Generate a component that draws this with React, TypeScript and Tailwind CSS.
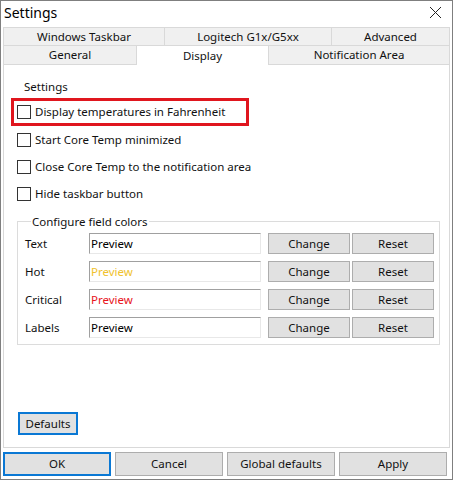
import React from 'react';

const font = { fontFamily: '"Noto Sans", "Liberation Sans", sans-serif' };

const Checkbox = ({ label }: { label: string }) => (
  <div className="flex items-center gap-[4px]">
    <span className="w-[14px] h-[14px] border border-[#333333] bg-white" />
    <span>{label}</span>
  </div>
);

const Btn = ({ label, focused = false, className = '' }: { label: string; focused?: boolean; className?: string }) => (
  <button
    className={`flex items-center justify-center bg-[#e1e1e1] text-[#111] ${
      focused ? 'border-2 border-[#0a78d4]' : 'border border-[#adadad]'
    } ${className}`}
  >
    {label}
  </button>
);

const App = () => {
  const topTabs = [
    { label: 'Windows Taskbar', w: 'w-[162px]' },
    { label: 'Logitech G1x/G5xx', w: 'w-[168px]' },
    { label: 'Advanced', w: 'flex-1' },
  ];

  const colorRows = [
    { label: 'Text', color: 'text-black' },
    { label: 'Hot', color: 'text-[#f0c22e]' },
    { label: 'Critical', color: 'text-[#e8141c]' },
    { label: 'Labels', color: 'text-black' },
  ];

  return (
    <div
      style={font}
      className="w-[453px] h-[480px] flex flex-col bg-white border border-[#7f7f7f] text-[11.5px] text-[#111] overflow-hidden"
    >
      {/* Title bar */}
      <div className="h-[26px] flex items-center justify-between pl-[3px] pr-[10px] pb-[4px] shrink-0">
        <span className="text-[14px] text-black">Settings</span>
        <svg width="13" height="13" viewBox="0 0 13 13">
          <path d="M1 1 L12 12 M12 1 L1 12" stroke="#222" strokeWidth="1" />
        </svg>
      </div>

      {/* Tabs */}
      <div className="px-[2px] shrink-0">
        <div className="flex h-[19px]">
          {topTabs.map((t) => (
            <div
              key={t.label}
              className={`${t.w} flex items-center justify-center bg-[#f0f0f0] border border-[#d9d9d9] -ml-px first:ml-0`}
            >
              {t.label}
            </div>
          ))}
        </div>
        <div className="flex h-[19px]">
          <div className="w-[133px] flex items-center justify-center bg-[#f0f0f0] border-l border-b border-[#d9d9d9]">
            General
          </div>
          <div className="w-[133px] flex items-start justify-center pt-[1px] bg-white border-x border-[#d9d9d9]">
            Display
          </div>
          <div className="flex-1 flex items-center justify-center bg-[#f0f0f0] border-r border-b border-[#d9d9d9]">
            Notification Area
          </div>
        </div>
      </div>

      {/* Panel */}
      <div className="mx-[2px] h-[383px] shrink-0 flex flex-col border-x border-b border-[#d9d9d9] bg-white">
        <div className="pl-[20px] pt-[14px] leading-[15px]">Settings</div>

        <div className="ml-[13px] mt-[4px] flex flex-col">
          <div className="-ml-[6px] w-[238px] h-[28px] pl-[3px] flex items-center border-[3px] border-[#e0161e]">
            <Checkbox label="Display temperatures in Fahrenheit" />
          </div>
          <div className="h-[27px] flex items-center">
            <Checkbox label="Start Core Temp minimized" />
          </div>
          <div className="h-[27px] flex items-center">
            <Checkbox label="Close Core Temp to the notification area" />
          </div>
          <div className="h-[27px] flex items-center">
            <Checkbox label="Hide taskbar button" />
          </div>
        </div>

        <fieldset className="ml-[13px] mt-[7px] w-[423px] border border-[#dcdcdc] pl-[7px] pr-[4px] pb-[6px]">
          <legend className="ml-[6px] px-[1px] leading-[15px]">Configure field colors</legend>
          <div className="flex flex-col gap-[7px] mt-[4px]">
            {colorRows.map((r) => (
              <div key={r.label} className="flex items-center h-[21px]">
                <span className="w-[64px]">{r.label}</span>
                <div
                  className={`w-[172px] h-[21px] flex items-center pl-px bg-white border border-t-[#a0a0a0] border-l-[#a0a0a0] border-b-[#e8e8e8] border-r-[#e8e8e8] ${r.color}`}
                >
                  Preview
                </div>
                <Btn label="Change" className="ml-[7px] w-[82px] h-[21px]" />
                <Btn label="Reset" className="ml-[2px] w-[82px] h-[21px]" />
              </div>
            ))}
          </div>
        </fieldset>

        <div className="mt-auto mb-[12px] ml-[14px]">
          <Btn label="Defaults" focused className="w-[60px] h-[23px]" />
        </div>
      </div>

      {/* Bottom buttons */}
      <div className="mx-[2px] mt-[4px] grid grid-cols-4 gap-[4px] h-[24px] pr-[3px]">
        <Btn label="OK" focused />
        <Btn label="Cancel" />
        <Btn label="Global defaults" />
        <Btn label="Apply" />
      </div>
    </div>
  );
};

export default App;
